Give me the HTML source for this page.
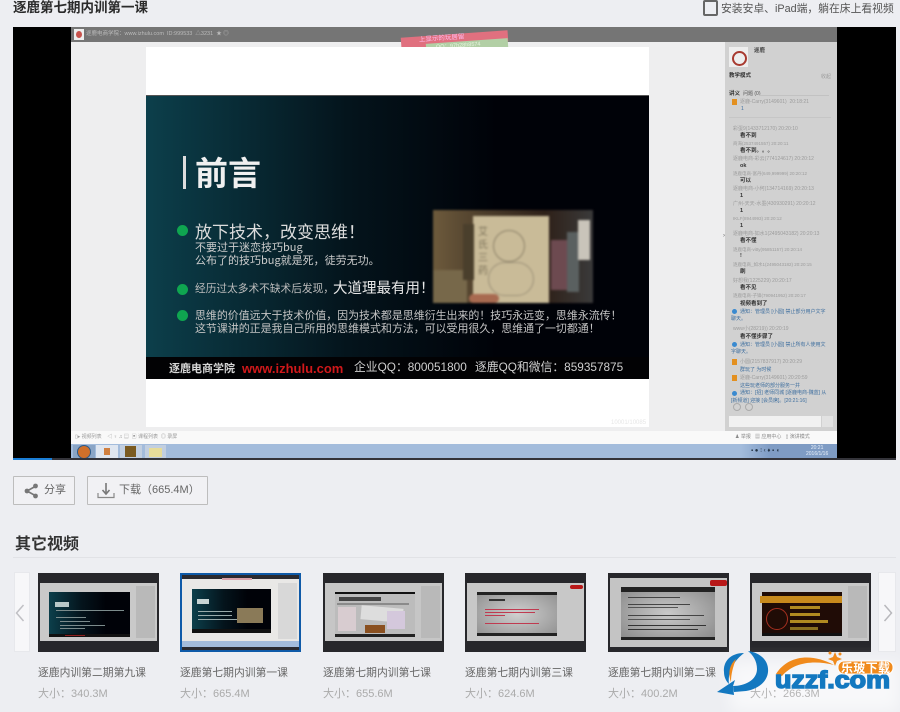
<!DOCTYPE html>
<html><head><meta charset="utf-8"><style>
html,body{margin:0;padding:0}
body{width:900px;height:712px;overflow:hidden;background:#edeef2;position:relative;font-family:"Liberation Sans","WenQuanYi Zen Hei","Noto Sans CJK SC",sans-serif;color:#555}
.a,.a *{position:absolute}
.a{position:absolute;display:block}
span.t{position:absolute;white-space:nowrap;line-height:1}
.c span{position:absolute;white-space:nowrap;line-height:1;font-size:5px;color:#9c9c9c}
.c b{position:absolute;white-space:nowrap;line-height:1;font-size:5.5px;color:#333}
.c i{position:absolute;white-space:nowrap;line-height:1;font-size:5px;color:#3f6f9f;font-style:normal}
.th{position:absolute;top:573px;width:121px;height:79px;background:#27272b;overflow:hidden}
.th div{position:absolute}
.lb{position:absolute;top:666px;font-size:10.8px;line-height:14px;color:#666;white-space:nowrap}
.sz{position:absolute;top:687px;font-size:11px;line-height:14px;color:#aaa;white-space:nowrap}
.btn{position:absolute;top:476px;height:27px;background:#f1f1f4;border:1px solid #bdbdbd;border-radius:1px;font-size:12px;line-height:27px;color:#666;white-space:nowrap}
.sl{background:linear-gradient(90deg,#0c3f4b,#04141c 40%,#000208 70%)}
</style></head><body>

<span class="t" style="left:13px;top:-1px;font-size:13.5px;font-weight:bold;color:#2a2a2a;font-family:'Noto Sans CJK SC',sans-serif;line-height:15px">逐鹿第七期内训第一课</span>
<div class="a" style="left:703px;top:0;width:11px;height:12px;border:2px solid #666;border-radius:2px"></div>
<span class="t" style="left:721px;top:4px;font-size:10.8px;color:#555">安装安卓、iPad端，躺在床上看视频</span>

<!-- player -->
<div class="a" style="left:13px;top:27px;width:883px;height:431px;background:#000;overflow:hidden">
 <div style="left:58px;top:0;width:766px;height:431px;background:#eeeeef;filter:blur(.35px)">
  <div style="left:0;top:0;width:766px;height:15px;background:#757575"></div>
  <div style="left:3px;top:2px;width:10px;height:11px;background:#eee"></div>
  <div style="left:5px;top:4px;width:6px;height:7px;background:#c8524c;border-radius:50%"></div>
  <span class="t" style="left:15px;top:5px;font-size:5.5px;color:#bbb">逐鹿电商学院：www.izhulu.com &nbsp;ID:999533 &nbsp;△3231 &nbsp;★ ◎</span>
  <div style="left:330px;top:7px;width:107px;height:11px;background:#e0707f;transform:rotate(-4deg)"></div>
  <div style="left:355px;top:14px;width:82px;height:9px;background:#b2cfa5;transform:rotate(-4deg)"></div>
  <span class="t" style="left:348px;top:9px;font-size:6.5px;color:#fbe;transform:rotate(-4deg)">上显示的玩居留</span>
  <span class="t" style="left:365px;top:17px;font-size:5.5px;color:#e8f4e0;transform:rotate(-4deg)">QQ：97h28h8574</span>
  <div style="left:75px;top:20px;width:503px;height:380px;background:#fff"></div>
  <!-- slide -->
  <div class="sl" style="left:75px;top:68px;width:503px;height:284px;border-top:1px solid #555;box-sizing:border-box;overflow:hidden">
   <div style="left:37px;top:60px;width:3px;height:33px;background:#ddd"></div>
   <span class="t" style="left:49px;top:59px;font-size:33px;font-weight:bold;color:#f0f0f0;font-family:'Noto Sans CJK SC',sans-serif">前言</span>
   <div style="left:31px;top:129px;width:11px;height:11px;border-radius:50%;background:#0fa550"></div>
   <div style="left:31px;top:188px;width:11px;height:11px;border-radius:50%;background:#0fa550"></div>
   <div style="left:31px;top:214px;width:11px;height:11px;border-radius:50%;background:#0fa550"></div>
   <span class="t" style="left:49px;top:126px;font-size:17px;color:#dcdcdc;font-family:'Noto Sans CJK SC',sans-serif">放下技术，改变思维！</span>
   <span class="t" style="left:49px;top:146px;font-size:11px;color:#ccc;font-family:'Noto Sans CJK SC',sans-serif">不要过于迷恋技巧bug</span>
   <span class="t" style="left:49px;top:159px;font-size:11px;color:#ccc;font-family:'Noto Sans CJK SC',sans-serif">公布了的技巧bug就是死，徒劳无功。</span>
   <span class="t" style="left:49px;top:188px;font-size:10.7px;color:#bbb;font-family:'Noto Sans CJK SC',sans-serif">经历过太多术不缺术后发现，</span>
   <span class="t" style="left:187px;top:185px;font-size:14.5px;color:#e8e8e8;font-family:'Noto Sans CJK SC',sans-serif">大道理最有用！</span>
   <span class="t" style="left:49px;top:214px;font-size:10.95px;color:#c4c4c4;font-family:'Noto Sans CJK SC',sans-serif">思维的价值远大于技术价值，因为技术都是思维衍生出来的！技巧永远变，思维永流传！</span>
   <span class="t" style="left:49px;top:227px;font-size:10.95px;color:#c4c4c4;font-family:'Noto Sans CJK SC',sans-serif">这节课讲的正是我自己所用的思维模式和方法，可以受用很久，思维通了一切都通！</span>
   <!-- photo -->
   <div style="left:287px;top:114px;width:160px;height:93px;background:linear-gradient(90deg,#6d5a3c,#4e3f2c 30%,#2e2018 70%,#3a3a3a);overflow:hidden;filter:blur(1px)">
    <div style="left:40px;top:6px;width:76px;height:87px;background:#c9bb98"></div>
    <div style="left:0;top:60px;width:34px;height:33px;background:#77684a"></div>
    <div style="left:30px;top:14px;width:11px;height:56px;background:#4a3f2c"></div>
    <div style="left:118px;top:30px;width:16px;height:50px;background:#6d4a50"></div>
    <div style="left:134px;top:22px;width:12px;height:60px;background:#5a6060"></div>
    <div style="left:145px;top:10px;width:12px;height:40px;background:#c9c4ba"></div>
    <div style="left:60px;top:20px;width:30px;height:30px;border:1px solid #8c8168;border-radius:50%"></div>
    <div style="left:55px;top:52px;width:44px;height:32px;border:1px solid #9c9178;border-radius:18px"></div>
    <span class="t" style="left:45px;top:16px;font-size:10px;width:11px;white-space:normal;color:#7b7158;line-height:13px">艾氏三药</span>
    <div style="left:36px;top:84px;width:30px;height:9px;background:#a86a50;border-radius:5px"></div>
   </div>
   <div style="left:0;top:261px;width:503px;height:22px;background:#020204;border-bottom:0"></div>
   <span class="t" style="left:23px;top:267px;font-size:11px;font-weight:bold;color:#d6d6d6;font-family:'Noto Sans CJK SC',sans-serif">逐鹿电商学院</span>
   <span class="t" style="left:96px;top:266px;font-size:13px;font-weight:bold;color:#d0181a">www.izhulu.com</span>
   <span class="t" style="left:208px;top:266px;font-size:11.8px;color:#cfcfcf">企业QQ：800051800</span>
   <span class="t" style="left:329px;top:266px;font-size:11.8px;color:#cfcfcf">逐鹿QQ和微信：859357875</span>
  </div>
  <span class="t" style="left:540px;top:393px;font-size:6px;color:#e6e6e6">10001/10085</span>
  <span class="t" style="left:652px;top:206px;font-size:6px;color:#666">›</span>
  <!-- right panel -->
  <div class="c" style="left:654px;top:15px;width:112px;height:389px;background:#d1d1d1">
   <div style="left:4px;top:5px;width:19px;height:20px;background:#eee"></div>
   <div style="left:7px;top:9px;width:11px;height:11px;border:2px solid #a83a30;border-radius:50%"></div>
   <b style="left:29px;top:7px;color:#444">逐鹿</b>
   <b style="left:4px;top:32px">教学模式</b><span style="left:96px;top:33px">收起</span>
   <b style="left:4px;top:50px">讲义</b><span style="left:18px;top:50px;color:#555">问题 (0)</span>
   <div style="left:34px;top:53px;width:70px;height:1px;background:#c2c2c2"></div>
   <div style="left:7px;top:57px;width:5px;height:6px;background:#e39020"></div>
   <span style="left:15px;top:58px">逐鹿-Carry(3149601) &nbsp;20:18:21</span>
   <i style="left:16px;top:65px">1</i>
   <div style="left:4px;top:75px;width:102px;height:1px;background:#c6c6c6"></div>
   <span style="left:8px;top:85px">彩蛋9(1433712170) 20:20:10</span><b style="left:15px;top:92px">看不到</b>
   <span style="left:8px;top:100px;font-size:4.5px">商海(2537491557) 20:20:11</span><b style="left:15px;top:107px">看不到。。。</b>
   <span style="left:8px;top:115px">逐鹿电商-彩云(774124617) 20:20:12</span><b style="left:15px;top:122px">ok</b>
   <span style="left:8px;top:130px;font-size:4.5px">逐鹿电商-富丹(649,999999) 20:20:12</span><b style="left:15px;top:137px">可以</b>
   <span style="left:8px;top:145px">逐鹿电商-小何(134714169) 20:20:13</span><b style="left:15px;top:152px">1</b>
   <span style="left:8px;top:160px">广州-天天-水墨(430930291) 20:20:12</span><b style="left:15px;top:167px">1</b>
   <span style="left:8px;top:175px;font-size:4.5px">IKLF(8944993) 20:20:12</span><b style="left:15px;top:182px">1</b>
   <span style="left:8px;top:190px">逐鹿电商-如水1(2495043182) 20:20:13</span><b style="left:15px;top:197px">看不懂</b>
   <span style="left:8px;top:206px;font-size:4.5px">逐鹿电商-vitty(95851157) 20:20:14</span><b style="left:15px;top:212px">!</b>
   <span style="left:8px;top:221px;font-size:4.5px">逐鹿电商_如水1(2495043182) 20:20:15</span><b style="left:15px;top:228px">刷</b>
   <span style="left:8px;top:237px">好想我(1225229) 20:20:17</span><b style="left:15px;top:244px">看不见</b>
   <span style="left:8px;top:252px;font-size:4.5px">逐鹿电商-子锋(790941952) 20:20:17</span><b style="left:15px;top:260px">视频看到了</b>
   <div style="left:7px;top:267px;width:5px;height:5px;border-radius:50%;background:#3a8ad0"></div>
   <i style="left:15px;top:268px">通知：管理员 [小圆] 禁止部分用户文字</i><i style="left:6px;top:275px">聊天。</i>
   <span style="left:8px;top:285px">www小(28219)) 20:20:19</span><b style="left:15px;top:293px">看不懂步骤了</b>
   <div style="left:7px;top:300px;width:5px;height:5px;border-radius:50%;background:#3a8ad0"></div>
   <i style="left:15px;top:301px">通知：管理员 [小圆] 禁止所有人使用文</i><i style="left:6px;top:308px">字聊天。</i>
   <div style="left:7px;top:317px;width:5px;height:6px;background:#e39020"></div>
   <span style="left:15px;top:318px">小圆(2157837917) 20:20:29</span><i style="left:15px;top:326px">群玩了 为时候</i>
   <div style="left:7px;top:333px;width:5px;height:6px;background:#e39020"></div>
   <span style="left:15px;top:334px">逐鹿-Carry(3149601) 20:20:59</span><i style="left:15px;top:342px">这些玩老师的部分服务一并</i>
   <div style="left:7px;top:349px;width:5px;height:5px;border-radius:50%;background:#3a8ad0"></div>
   <i style="left:15px;top:349px">通知：[招] 老师同城 [逐鹿电商-魏蓝] 从</i><i style="left:6px;top:357px">[新频道] 迎接 [会员席]。[20:21:16]</i>
   <div style="left:8px;top:361px;width:6px;height:6px;border:1px solid #aaa;border-radius:50%"></div>
   <div style="left:20px;top:361px;width:6px;height:6px;border:1px solid #aaa;border-radius:50%"></div>
   <div style="left:4px;top:374px;width:92px;height:11px;background:#f1f1f1"></div>
   <div style="left:97px;top:374px;width:11px;height:11px;background:#e2e2e2"></div>
  </div>
  <div style="left:0;top:404px;width:766px;height:13px;background:#f9f9f9"></div>
  <span class="t" style="left:4px;top:408px;font-size:5px;color:#999">▯▸ 视频列表 &nbsp; &nbsp;◁ ♀ ♫ ▤ &nbsp;▣ 课程列表 &nbsp;◎ 录屏</span>
  <span class="t" style="left:664px;top:408px;font-size:5px;color:#888">♟ 举报 &nbsp; ▦ 应用中心 &nbsp; ▯ 演讲模式</span>
  <div style="left:0;top:417px;width:766px;height:14px;background:#a3bcdc"></div>
  <div style="left:2px;top:418px;width:22px;height:13px;background:#8aa5c6"></div>
  <div style="left:6px;top:418px;width:12px;height:12px;border-radius:50%;background:#d0702a;border:1px solid #2b5a8a"></div>
  <div style="left:25px;top:418px;width:22px;height:13px;background:#dfe6f0"></div>
  <div style="left:33px;top:421px;width:6px;height:7px;background:#d08040"></div>
  <div style="left:49px;top:418px;width:22px;height:13px;background:#c2cfe0"></div>
  <div style="left:54px;top:419px;width:11px;height:11px;background:#7a5a20"></div>
  <div style="left:74px;top:418px;width:21px;height:13px;background:#c2cfe0"></div>
  <div style="left:78px;top:421px;width:13px;height:9px;background:#e6dc9a"></div>
  <div style="left:670px;top:417px;width:96px;height:14px;background:linear-gradient(90deg,#a3bcdc,#7f9cc4 30%)"></div>
  <span class="t" style="left:680px;top:421px;font-size:6px;color:#234">▪ ● ⁝ ‹ ♦ ▪ ◖</span>
  <span class="t" style="left:735px;top:418px;font-size:5px;color:#e8f0fa;line-height:6px;white-space:pre;text-align:center">20:21
2016/1/16</span>
 </div>
</div>
<div class="a" style="left:13px;top:458px;width:883px;height:2px;background:#34343a"></div>
<div class="a" style="left:13px;top:458px;width:39px;height:2px;background:#1b7ed6"></div>

<!-- buttons -->
<div class="btn" style="left:13px;width:60px"><span class="t" style="left:30px;top:8px;font-size:11px;color:#666">分享</span>
<svg style="position:absolute;left:10px;top:6px" width="15" height="16" viewBox="0 0 15 16"><path d="M12 3 L3 8 L12 13" stroke="#777" stroke-width="1.6" fill="none"/><circle cx="11.5" cy="3" r="2.4" fill="#777"/><circle cx="3" cy="8" r="2.4" fill="#777"/><circle cx="11.5" cy="13" r="2.4" fill="#777"/></svg></div>
<div class="btn" style="left:87px;width:119px"><span class="t" style="left:31px;top:8px;font-size:11px;color:#666">下载（665.4M）</span>
<svg style="position:absolute;left:9px;top:6px" width="18" height="16" viewBox="0 0 18 16"><path d="M9 0V9.5M5.5 7L9 11L12.5 7" stroke="#777" stroke-width="1.6" fill="none"/><path d="M1 10V14.5H17V10" stroke="#888" stroke-width="1.2" fill="none"/></svg></div>

<span class="t" style="left:15px;top:534px;font-size:16px;font-weight:bold;color:#333;font-family:'Noto Sans CJK SC',sans-serif">其它视频</span>
<div class="a" style="left:13px;top:557px;width:883px;height:1px;background:#e1e2e6"></div>

<!-- arrows -->
<div class="a" style="left:14px;top:572px;width:16px;height:80px;background:#f7f7f9;border:1px solid #e7e8ec;box-sizing:border-box"></div>
<svg class="a" style="left:15px;top:604px" width="10" height="18" viewBox="0 0 10 18"><path d="M8.5 1L1.5 9L8.5 17" stroke="#c0c0c4" stroke-width="1.5" fill="none"/></svg>
<div class="a" style="left:878px;top:572px;width:18px;height:80px;background:#f7f7f9;border:1px solid #e7e8ec;box-sizing:border-box"></div>
<svg class="a" style="left:883px;top:604px" width="10" height="18" viewBox="0 0 10 18"><path d="M1.5 1L8.5 9L1.5 17" stroke="#b8b8bc" stroke-width="1.5" fill="none"/></svg>

<!-- thumbs -->
<div class="th" style="left:38px">
 <div style="left:2px;top:10px;width:117px;height:58px;background:#c9c9c9"></div>
 <div class="sl" style="left:11px;top:19px;width:81px;height:45px"></div>
 <div style="left:17px;top:29px;width:14px;height:5px;background:#b8c8c8"></div>
 <div style="left:18px;top:37px;width:68px;height:1px;background:#7c8c8c"></div>
 <div style="left:18px;top:44px;width:30px;height:1px;background:#7c8c8c"></div>
 <div style="left:22px;top:48px;width:30px;height:1px;background:#7c8c8c"></div>
 <div style="left:22px;top:52px;width:45px;height:1px;background:#7c8c8c"></div>
 <div style="left:22px;top:55px;width:25px;height:1px;background:#7c8c8c"></div>
 <div style="left:11px;top:61px;width:81px;height:3px;background:#111"></div>
 <div style="left:27px;top:62px;width:20px;height:1px;background:#8c2020"></div>
 <div style="left:98px;top:13px;width:19px;height:52px;background:#b9b9b9"></div>
</div>
<div class="th" style="left:180px;box-sizing:border-box;border:2px solid #0f5aa8;background:#2a2a30">
 <div style="left:0;top:4px;width:117px;height:68px;background:#e9e8e6"></div>
 <div style="left:10px;top:14px;width:79px;height:44px;background:linear-gradient(90deg,#0c3f4b,#04141c 40%,#000208 70%)"></div>
 <div style="left:15px;top:24px;width:12px;height:5px;background:#c8d4d4"></div>
 <div style="left:16px;top:36px;width:34px;height:1px;background:#9aa"></div>
 <div style="left:16px;top:40px;width:34px;height:1px;background:#9aa"></div>
 <div style="left:16px;top:44px;width:60px;height:1px;background:#9aa"></div>
 <div style="left:55px;top:33px;width:26px;height:15px;background:#8a7a58"></div>
 <div style="left:10px;top:54px;width:79px;height:4px;background:#111"></div>
 <div style="left:96px;top:8px;width:19px;height:56px;background:#d8d8d8"></div>
 <div style="left:0;top:66px;width:117px;height:6px;background:#a3bcdc"></div>
 <div style="left:40px;top:3px;width:30px;height:2px;background:#d8a0a8"></div>
</div>
<div class="th" style="left:323px">
 <div style="left:2px;top:10px;width:117px;height:58px;background:#c6c6c6"></div>
 <div style="left:12px;top:19px;width:80px;height:45px;background:#bcbcbc"></div>
 <div style="left:12px;top:19px;width:80px;height:2px;background:#111"></div>
 <div style="left:16px;top:24px;width:42px;height:4px;background:#444"></div>
 <div style="left:14px;top:30px;width:72px;height:2px;background:#8a8a8a"></div>
 <div style="left:15px;top:34px;width:18px;height:24px;background:#d8ccd0"></div>
 <div style="left:38px;top:34px;width:42px;height:14px;background:#ddd;transform:rotate(5deg)"></div>
 <div style="left:64px;top:38px;width:18px;height:18px;background:#d4c8dc"></div>
 <div style="left:42px;top:52px;width:20px;height:8px;background:#8a5020"></div>
 <div style="left:12px;top:61px;width:80px;height:3px;background:#222"></div>
 <div style="left:98px;top:13px;width:19px;height:52px;background:#b9b9b9"></div>
</div>
<div class="th" style="left:465px">
 <div style="left:2px;top:10px;width:117px;height:58px;background:#c8c8c8"></div>
 <div style="left:12px;top:19px;width:80px;height:44px;background:radial-gradient(ellipse,#cfcfcf,#8f8f8f)"></div>
 <div style="left:12px;top:19px;width:80px;height:3px;background:#222"></div>
 <div style="left:24px;top:26px;width:16px;height:2px;background:#333"></div>
 <div style="left:20px;top:36px;width:54px;height:1px;background:#c03a50"></div>
 <div style="left:20px;top:39px;width:50px;height:1px;background:#c03a50"></div>
 <div style="left:20px;top:42px;width:20px;height:1px;background:#c03a50"></div>
 <div style="left:20px;top:50px;width:54px;height:1px;background:#c03a50"></div>
 <div style="left:12px;top:60px;width:80px;height:3px;background:#222"></div>
 <div style="left:105px;top:12px;width:13px;height:4px;background:#b81818;border-radius:2px"></div>
</div>
<div class="th" style="left:608px">
 <div style="left:2px;top:5px;width:117px;height:69px;background:#c4c4c4"></div>
 <div style="left:13px;top:14px;width:94px;height:53px;background:radial-gradient(ellipse,#cacaca,#888)"></div>
 <div style="left:13px;top:14px;width:94px;height:5px;background:#222"></div>
 <div style="left:13px;top:64px;width:94px;height:3px;background:#222"></div>
 <div style="left:20px;top:24px;width:52px;height:1px;background:#444"></div>
 <div style="left:20px;top:31px;width:62px;height:1px;background:#444"></div>
 <div style="left:20px;top:34px;width:50px;height:1px;background:#555"></div>
 <div style="left:20px;top:42px;width:76px;height:1px;background:#444"></div>
 <div style="left:20px;top:46px;width:62px;height:1px;background:#555"></div>
 <div style="left:20px;top:52px;width:78px;height:1px;background:#333"></div>
 <div style="left:20px;top:56px;width:70px;height:1px;background:#333"></div>
 <div style="left:102px;top:7px;width:17px;height:6px;background:#b81818;border-radius:2px"></div>
</div>
<div class="th" style="left:750px">
 <div style="left:2px;top:10px;width:117px;height:58px;background:#c8c8c8"></div>
 <div style="left:12px;top:19px;width:80px;height:44px;background:#200c06"></div>
 <div style="left:10px;top:23px;width:82px;height:7px;background:#c88a1c"></div>
 <div style="left:16px;top:35px;width:20px;height:20px;border:1px solid #a83020;border-radius:50%"></div>
 <div style="left:40px;top:33px;width:30px;height:3px;background:#b08a20"></div>
 <div style="left:40px;top:40px;width:30px;height:3px;background:#b08a20"></div>
 <div style="left:40px;top:47px;width:38px;height:3px;background:#b08a20"></div>
 <div style="left:40px;top:54px;width:28px;height:3px;background:#8a7020"></div>
 <div style="left:12px;top:60px;width:80px;height:3px;background:#111"></div>
 <div style="left:98px;top:13px;width:19px;height:52px;background:#b9b9b9"></div>
</div>

<div class="lb" style="left:38px">逐鹿内训第二期第九课</div><div class="sz" style="left:38px">大小：340.3M</div>
<div class="lb" style="left:180px">逐鹿第七期内训第一课</div><div class="sz" style="left:180px">大小：665.4M</div>
<div class="lb" style="left:323px">逐鹿第七期内训第七课</div><div class="sz" style="left:323px">大小：655.6M</div>
<div class="lb" style="left:465px">逐鹿第七期内训第三课</div><div class="sz" style="left:465px">大小：624.6M</div>
<div class="lb" style="left:608px">逐鹿第七期内训第二课</div><div class="sz" style="left:608px">大小：400.2M</div>

<!-- watermark -->
<div class="a" style="left:730px;top:662px;width:170px;height:50px;background:rgba(255,255,255,.6);filter:blur(8px)"></div>
<div class="sz" style="left:750px;color:#b4b4b4">大小：266.3M</div>
<svg class="a" style="left:700px;top:640px" width="200" height="72" viewBox="0 0 200 72">
 <path d="M48 11C62 13 69 22 68 32C67 42 58 49 46 51L34 52L33 46C45 46 57 40 57 29C57 21 53 15 48 11Z" fill="#1378c0"/>
 <path d="M44 13C30 13 23 22 24 32C24 37 26 41 29 44C28 36 30 24 44 13Z" fill="#1378c0"/>
 <path d="M36 19C29 25 28 34 31 42C31 34 33 27 36 19Z" fill="#f08a1c"/>
 <path d="M17 52L35 40L33 46L34 55Z" fill="#1378c0"/>
 <path d="M76 34C88 15 112 13 134 25C114 20 94 22 82 36Z" fill="#f08a1c"/>
 <path d="M133 17L135 12L137 17L142 19L137 21L135 26L133 21L128 19Z" fill="#f08a1c"/>
 <circle cx="130" cy="13" r="1.5" fill="#f08a1c"/><circle cx="140" cy="14" r="1.5" fill="#f08a1c"/>
 <text x="75" y="48" font-family="Liberation Sans" font-weight="bold" font-size="24" fill="#1378c0" textLength="115" lengthAdjust="spacingAndGlyphs" stroke="#1378c0" stroke-width="1.5">uzzf.com</text>
 <rect x="138" y="21" width="55" height="13" rx="6" fill="#f08a1c" stroke="#fff"/>
 <text x="141" y="32" font-family="Noto Sans CJK SC" font-weight="bold" font-size="12" fill="#fff" textLength="49">乐玻下载</text>
</svg>
</body></html>
